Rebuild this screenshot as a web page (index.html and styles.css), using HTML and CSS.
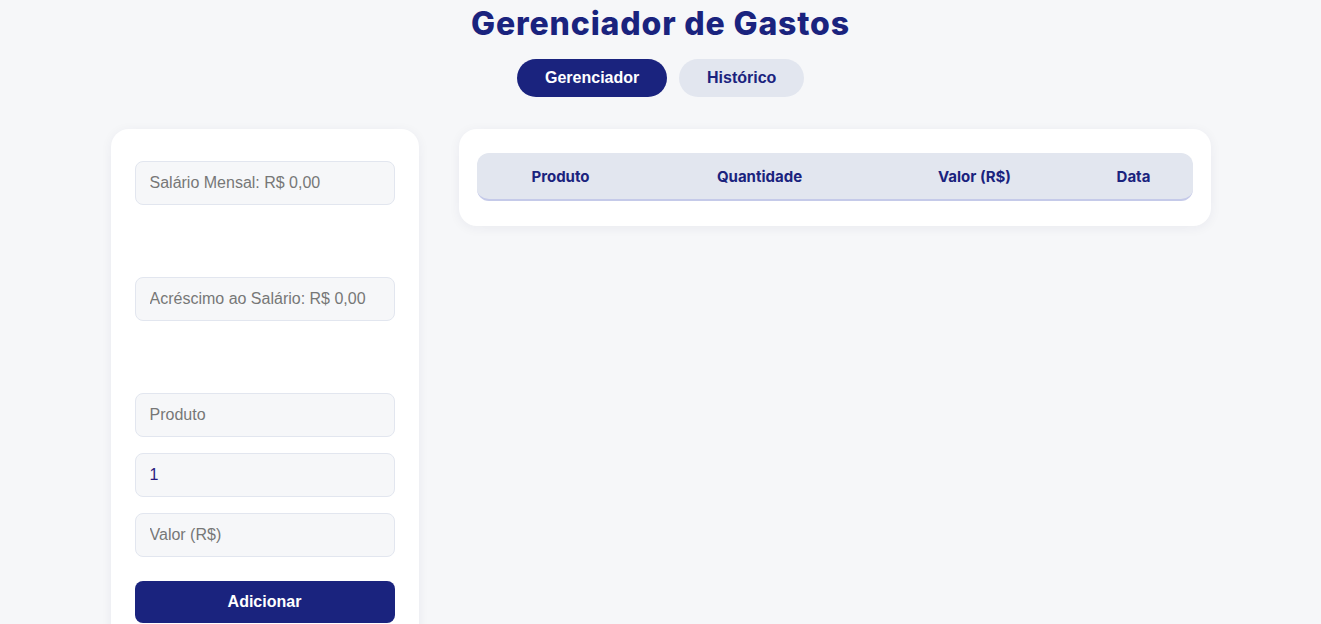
FILE: index.html
```html
<!DOCTYPE html>
<html lang="pt-BR">
<head>
<meta charset="utf-8">
<title>Gerenciador de Gastos</title>
<link rel="stylesheet" href="styles.css">
</head>
<body>
<header class="top">
  <h1 class="title">Gerenciador de Gastos</h1>
  <nav class="tabs">
    <button class="tab tab-active">Gerenciador</button>
    <button class="tab">Histórico</button>
  </nav>
</header>
<main class="layout">
  <section class="card side">
    <input class="field" type="text" placeholder="Salário Mensal: R$ 0,00">
    <div class="spacer"></div>
    <input class="field" type="text" placeholder="Acréscimo ao Salário: R$ 0,00">
    <div class="spacer"></div>
    <div class="form">
      <input class="field" type="text" placeholder="Produto">
      <input class="field field-value" type="number" value="1">
      <input class="field" type="text" placeholder="Valor (R$)">
      <button class="add">Adicionar</button>
    </div>
  </section>
  <section class="card table-card">
    <table class="table">
      <thead>
        <tr>
          <th class="c1">Produto</th>
          <th class="c2">Quantidade</th>
          <th class="c3">Valor (R$)</th>
          <th class="c4">Data</th>
        </tr>
      </thead>
    </table>
  </section>
</main>
</body>
</html>
```
FILE: styles.css
```css
* { box-sizing: border-box; }
body {
  margin: 0;
  background: #f6f7f9;
  font-family: Inter, "Liberation Sans", Arial, sans-serif;
  color: #1a237e;
}
.top {
  display: flex;
  flex-direction: column;
  align-items: center;
}
.title {
  margin: 4px 0 0;
  font-size: 32px;
  font-weight: 800;
  line-height: 39px;
  color: #1a237e;
  letter-spacing: 0.85px;
}
.tabs {
  display: flex;
  gap: 12px;
  margin-top: 16px;
}
.tab {
  height: 38px;
  border: none;
  border-radius: 19px;
  background: #e2e6ef;
  color: #1a237e;
  font-family: "Liberation Sans", Arial, sans-serif;
  font-weight: 700;
  font-size: 16px;
  padding: 0 28px;
  width: 125px;
}
.tab-active {
  background: #1a237e;
  color: #fff;
  width: 150px;
}
.layout {
  display: flex;
  gap: 40px;
  width: 1100px;
  margin: 32px auto 0;
  align-items: flex-start;
}
.card {
  background: #fff;
  border-radius: 18px;
  box-shadow: 0 2px 12px rgba(30, 40, 90, 0.06);
}
.side {
  width: 308px;
  flex: none;
  padding: 32px 24px 40px;
  display: flex;
  flex-direction: column;
}
.spacer { height: 72px; }
.form {
  display: flex;
  flex-direction: column;
  gap: 16px;
}
.field {
  height: 44px;
  width: 100%;
  border: 1px solid #e2e6ef;
  border-radius: 8px;
  background: #f6f7f9;
  padding: 0 14px;
  font-family: "Liberation Sans", Arial, sans-serif;
  font-size: 16px;
  color: #2a1a7e;
  outline: none;
}
.field::placeholder { color: #777; }
.field-value::-webkit-inner-spin-button,
.field-value::-webkit-outer-spin-button { -webkit-appearance: none; margin: 0; }
.add {
  margin-top: 8px;
  height: 42px;
  border: none;
  border-radius: 8px;
  background: #1a237e;
  color: #fff;
  font-family: "Liberation Sans", Arial, sans-serif;
  font-weight: 700;
  font-size: 16px;
}
.table-card {
  flex: 1;
  padding: 24px 18px 25px;
}
.table {
  width: 100%;
  border-collapse: separate;
  border-spacing: 0;
  table-layout: fixed;
}
.table th {
  height: 48px;
  background: #e2e6ef;
  border-bottom: 2px solid #c5cae9;
  font-size: 15px;
  font-weight: 700;
  color: #1a237e;
  text-align: center;
  padding: 0;
}
.c1 { width: 168px; border-top-left-radius: 12px; border-bottom-left-radius: 12px; }
.c2 { width: 230px; }
.c3 { width: 200px; }
.c4 { width: 118px; border-top-right-radius: 12px; border-bottom-right-radius: 12px; }
```
